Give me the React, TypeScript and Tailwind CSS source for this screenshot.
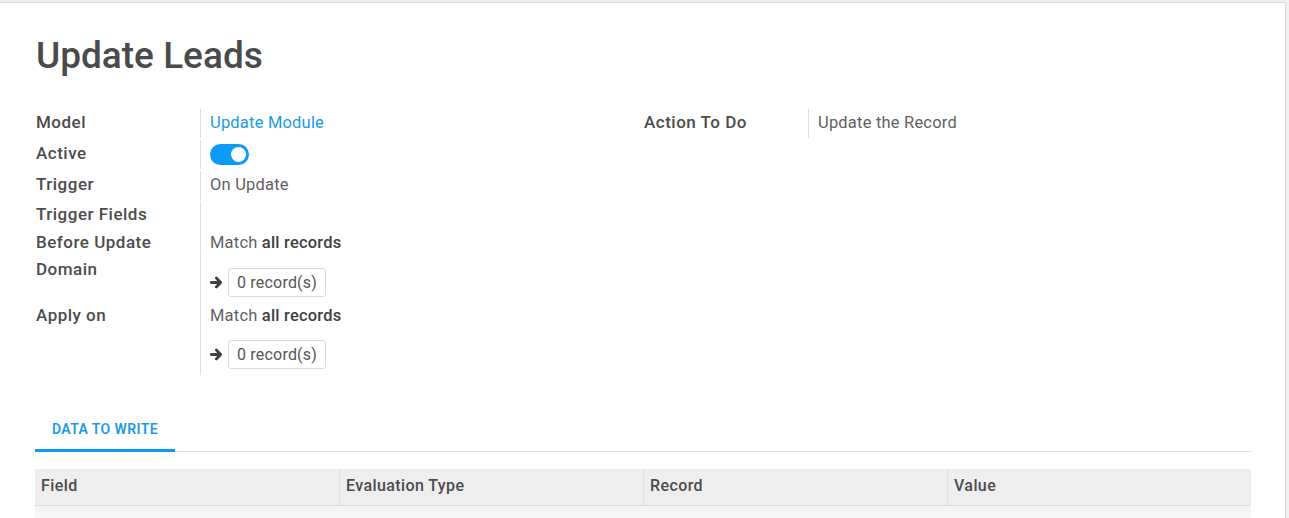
import { ReactNode } from 'react';

const font = { fontFamily: 'Roboto, "Liberation Sans", sans-serif' };

function Label({ children }: { children: ReactNode }) {
    return <div className="w-[164px] shrink-0 font-medium text-[17px] tracking-[0.5px] text-[#4c4c4c] leading-[27px]">{children}</div>;
}

function RecordButton() {
    return (
        <div className="flex items-center gap-[5px]">
            {/* arrow icon */}
            <svg width="13" height="13" viewBox="0 0 13 13" className="text-[#3f3f3f]">
                <path d="M1.4 6.5h8.8M6.3 2.1 10.7 6.5 6.3 10.9" stroke="currentColor" strokeWidth="2.8" fill="none" strokeLinecap="round" strokeLinejoin="round" />
            </svg>
            <div className="h-[29px] px-[8px] flex items-center border border-[#dcdcdc] rounded-[3px] text-[16px] tracking-[0.2px] text-[#555]">0 record(s)</div>
        </div>
    );
}

function Row({ label, children, className = '' }: { label: ReactNode; children?: ReactNode; className?: string }) {
    return (
        <div className={`flex ${className}`}>
            <Label>{label}</Label>
            <div className="border-l border-[#dedede] pl-[9px] flex-1 text-[16.5px] tracking-[0.2px] text-[#5f5f5f] leading-[27px]">{children}</div>
        </div>
    );
}

export default function App() {
    const cols = ['Field', 'Evaluation Type', 'Record', 'Value'];
    return (
        <div className="min-h-screen bg-[#eef0f2] pt-[2px]" style={font}>
            <div className="w-[1286px] h-[516px] bg-white border-t border-r border-[#d8dbe0] pl-[35px] overflow-hidden">
                <h1 className="w-[1216px] pt-[30px] pl-[1px] text-[37px] font-medium text-[#4a4a4a] leading-[46px]">Update Leads</h1>

                <div className="flex mt-[28px] pl-[1px]">
                    {/* left group */}
                    <div className="w-[608px] flex flex-col">
                        <Row label="Model" className="h-[31px] pt-[2px]">
                            <span className="text-[#1a9be6]">Update Module</span>
                        </Row>
                        <Row label="Active" className="h-[31px] pt-[2px]">
                            <div className="pt-[4px]">
                                <div className="w-[39px] h-[21px] rounded-full bg-[#0d9bf7] flex items-center justify-end pr-[3px]">
                                    <div className="w-[15px] h-[15px] rounded-full bg-white" />
                                </div>
                            </div>
                        </Row>
                        <Row label="Trigger" className="h-[31px] pt-[2px]">On Update</Row>
                        <Row label="Trigger Fields" className="h-[29px] pt-[1px]" />
                        <Row
                            label={
                                <>
                                    <div>Before Update</div>
                                    <div>Domain</div>
                                </>
                            }
                            className="h-[73px]"
                        >
                            <div>
                                Match <span className="font-medium text-[#3f3f3f]">all records</span>
                            </div>
                            <div className="mt-[12px]">
                                <RecordButton />
                            </div>
                        </Row>
                        <Row label="Apply on" className="h-[73px]">
                            <div>
                                Match <span className="font-medium text-[#3f3f3f]">all records</span>
                            </div>
                            <div className="mt-[11px]">
                                <RecordButton />
                            </div>
                        </Row>
                    </div>

                    {/* right group */}
                    <div className="w-[607px] flex flex-col">
                        <Row label="Action To Do" className="h-[31px] pt-[2px]">Update the Record</Row>
                    </div>
                </div>

                {/* tabs */}
                <div className="w-[1216px] mt-[37px] border-b border-[#dee2e6] flex">
                    <div className="w-[140px] h-[40px] border-b-[3px] border-[#0d9bf7] -mb-[1px] flex items-center justify-center text-[14px] font-semibold text-[#1a9be6] tracking-[0.4px] pb-[2px]">
                        DATA TO WRITE
                    </div>
                </div>

                {/* table */}
                <div className="w-[1216px] mt-[17px]">
                    <div className="grid grid-cols-4 h-[37px] bg-[#eeeeee] border-b border-[#dcdde3]">
                        {cols.map((c, i) => (
                            <div
                                key={c}
                                className={`px-[6px] pb-[3px] flex items-center text-[16px] tracking-[0.4px] font-medium text-[#4c4c4c] ${i > 0 ? 'border-l border-[#e2e2e2]' : ''}`}
                            >
                                {c}
                            </div>
                        ))}
                    </div>
                    <div className="h-[20px] bg-gradient-to-b from-[#f4f4f4] to-[#fafafa]" />
                </div>
            </div>
        </div>
    );
}
